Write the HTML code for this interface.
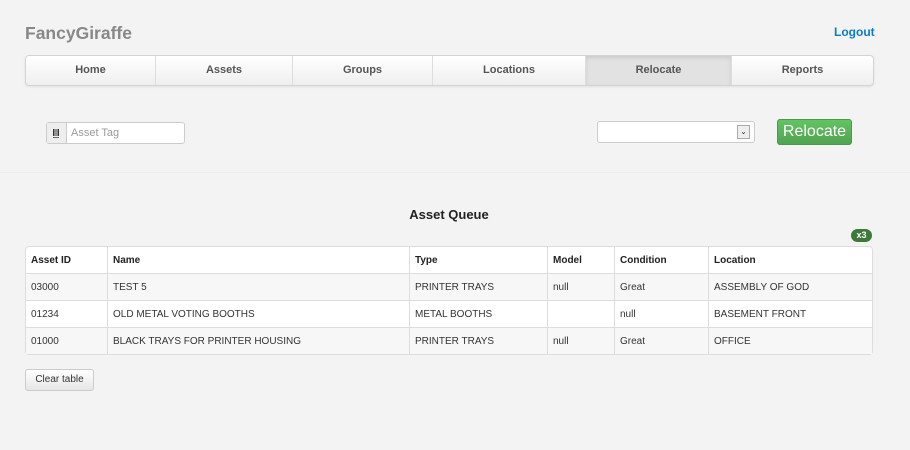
<!DOCTYPE html>
<html><head><style>
body{margin:0;width:910px;height:450px;background:#f3f3f3;font-family:"Liberation Sans",Arial,sans-serif;position:relative;overflow:hidden;color:#333}
.a{position:absolute}
.brand{left:25px;top:23px;font-size:17.5px;font-weight:bold;color:#888}
.logout{left:834px;top:25px;font-size:12px;font-weight:bold;color:#0a7bc4}
.nav{left:25px;top:55px;width:847px;height:29px;border:1px solid #d4d4d4;border-radius:4px;background:linear-gradient(#fff,#efefef);display:flex;overflow:hidden;box-shadow:0 1px 2px rgba(0,0,0,.08)}
.nav div{height:29px;line-height:29px;text-align:center;font-size:11px;font-weight:bold;color:#555;border-left:1px solid #ddd;box-sizing:border-box}
.nav div:first-child{border-left:0}
.nav .act{background:#e2e2e2;box-shadow:inset 0 2px 4px rgba(0,0,0,.1)}
.inp{left:46px;top:122px;width:137px;height:20px;border:1px solid #ccc;border-radius:3px;background:#fff;font-size:11px;color:#999}
.addon{position:absolute;left:0;top:0;width:19px;height:20px;background:#eee;border-right:1px solid #ccc}
.sel{left:597px;top:121px;width:156px;height:20px;border:1px solid #ccc;border-radius:3px;background:#fff}
.btn{left:777px;top:119px;width:73px;height:24px;background:linear-gradient(#62c462,#51a351);border:1px solid #4a9a4a;border-radius:3px;color:#fff;font-size:16px;text-align:center;line-height:24px}
.hr{left:0;top:172px;width:910px;height:1px;background:#ebebeb}
.title{left:0;width:898px;top:207px;text-align:center;font-size:13px;font-weight:bold;color:#222}
.badge{left:851px;top:229px;width:21px;height:13px;background:#3c7a3c;border-radius:7px;color:#fff;font-size:9px;font-weight:bold;text-align:center;line-height:13px}
table{position:absolute;left:25px;top:246px;width:848px;border-collapse:separate;border-spacing:0;border:1px solid #ddd;border-radius:4px;font-size:10px;background:#fff;table-layout:fixed}
td,th{height:27px;padding:0 5px;text-align:left;border-left:1px solid #ddd;border-top:1px solid #ddd;box-sizing:border-box}
th{border-top:0;height:26px;font-size:10px;color:#222}
tr td:first-child,tr th:first-child{border-left:0}
tbody tr:nth-child(odd) td{background:#f7f7f7}
.clr{left:25px;top:369px;width:67px;height:20px;border:1px solid #ccc;border-radius:3px;background:linear-gradient(#fff,#e6e6e6);font-size:10px;text-align:center;line-height:20px;color:#333}
</style></head><body>
<div class="a brand">FancyGiraffe</div>
<div class="a logout">Logout</div>
<div class="a nav">
<div style="width:129px">Home</div><div style="width:137px">Assets</div><div style="width:140px">Groups</div><div style="width:153px">Locations</div><div class="act" style="width:146px">Relocate</div><div style="flex:1">Reports</div>
</div>
<div class="a inp"><div class="addon"><svg width="19" height="20"><rect x="6" y="6" width="1.5" height="7" fill="#333"/><rect x="8.5" y="6" width="1" height="7" fill="#333"/><rect x="10.5" y="6" width="1.5" height="7" fill="#333"/><rect x="6" y="14" width="6" height="1" fill="#666"/></svg></div><span style="position:absolute;left:24px;top:4px">Asset Tag</span></div>
<div class="a sel"><div style="position:absolute;right:4px;top:3px;width:11px;height:12px;border:1px solid #aaa;background:#eee;font-size:8px;text-align:center;line-height:12px">&#8964;</div></div>
<div class="a btn">Relocate</div>
<div class="a hr"></div>
<div class="a title">Asset Queue</div>
<div class="a badge">x3</div>
<table>
<colgroup><col style="width:81px"><col style="width:302px"><col style="width:138px"><col style="width:67px"><col style="width:94px"><col></colgroup>
<thead><tr><th>Asset ID</th><th>Name</th><th>Type</th><th>Model</th><th>Condition</th><th>Location</th></tr></thead>
<tbody>
<tr><td>03000</td><td>TEST 5</td><td>PRINTER TRAYS</td><td>null</td><td>Great</td><td>ASSEMBLY OF GOD</td></tr>
<tr><td>01234</td><td>OLD METAL VOTING BOOTHS</td><td>METAL BOOTHS</td><td></td><td>null</td><td>BASEMENT FRONT</td></tr>
<tr><td>01000</td><td>BLACK TRAYS FOR PRINTER HOUSING</td><td>PRINTER TRAYS</td><td>null</td><td>Great</td><td>OFFICE</td></tr>
</tbody></table>
<div class="a clr">Clear table</div>
</body></html>
